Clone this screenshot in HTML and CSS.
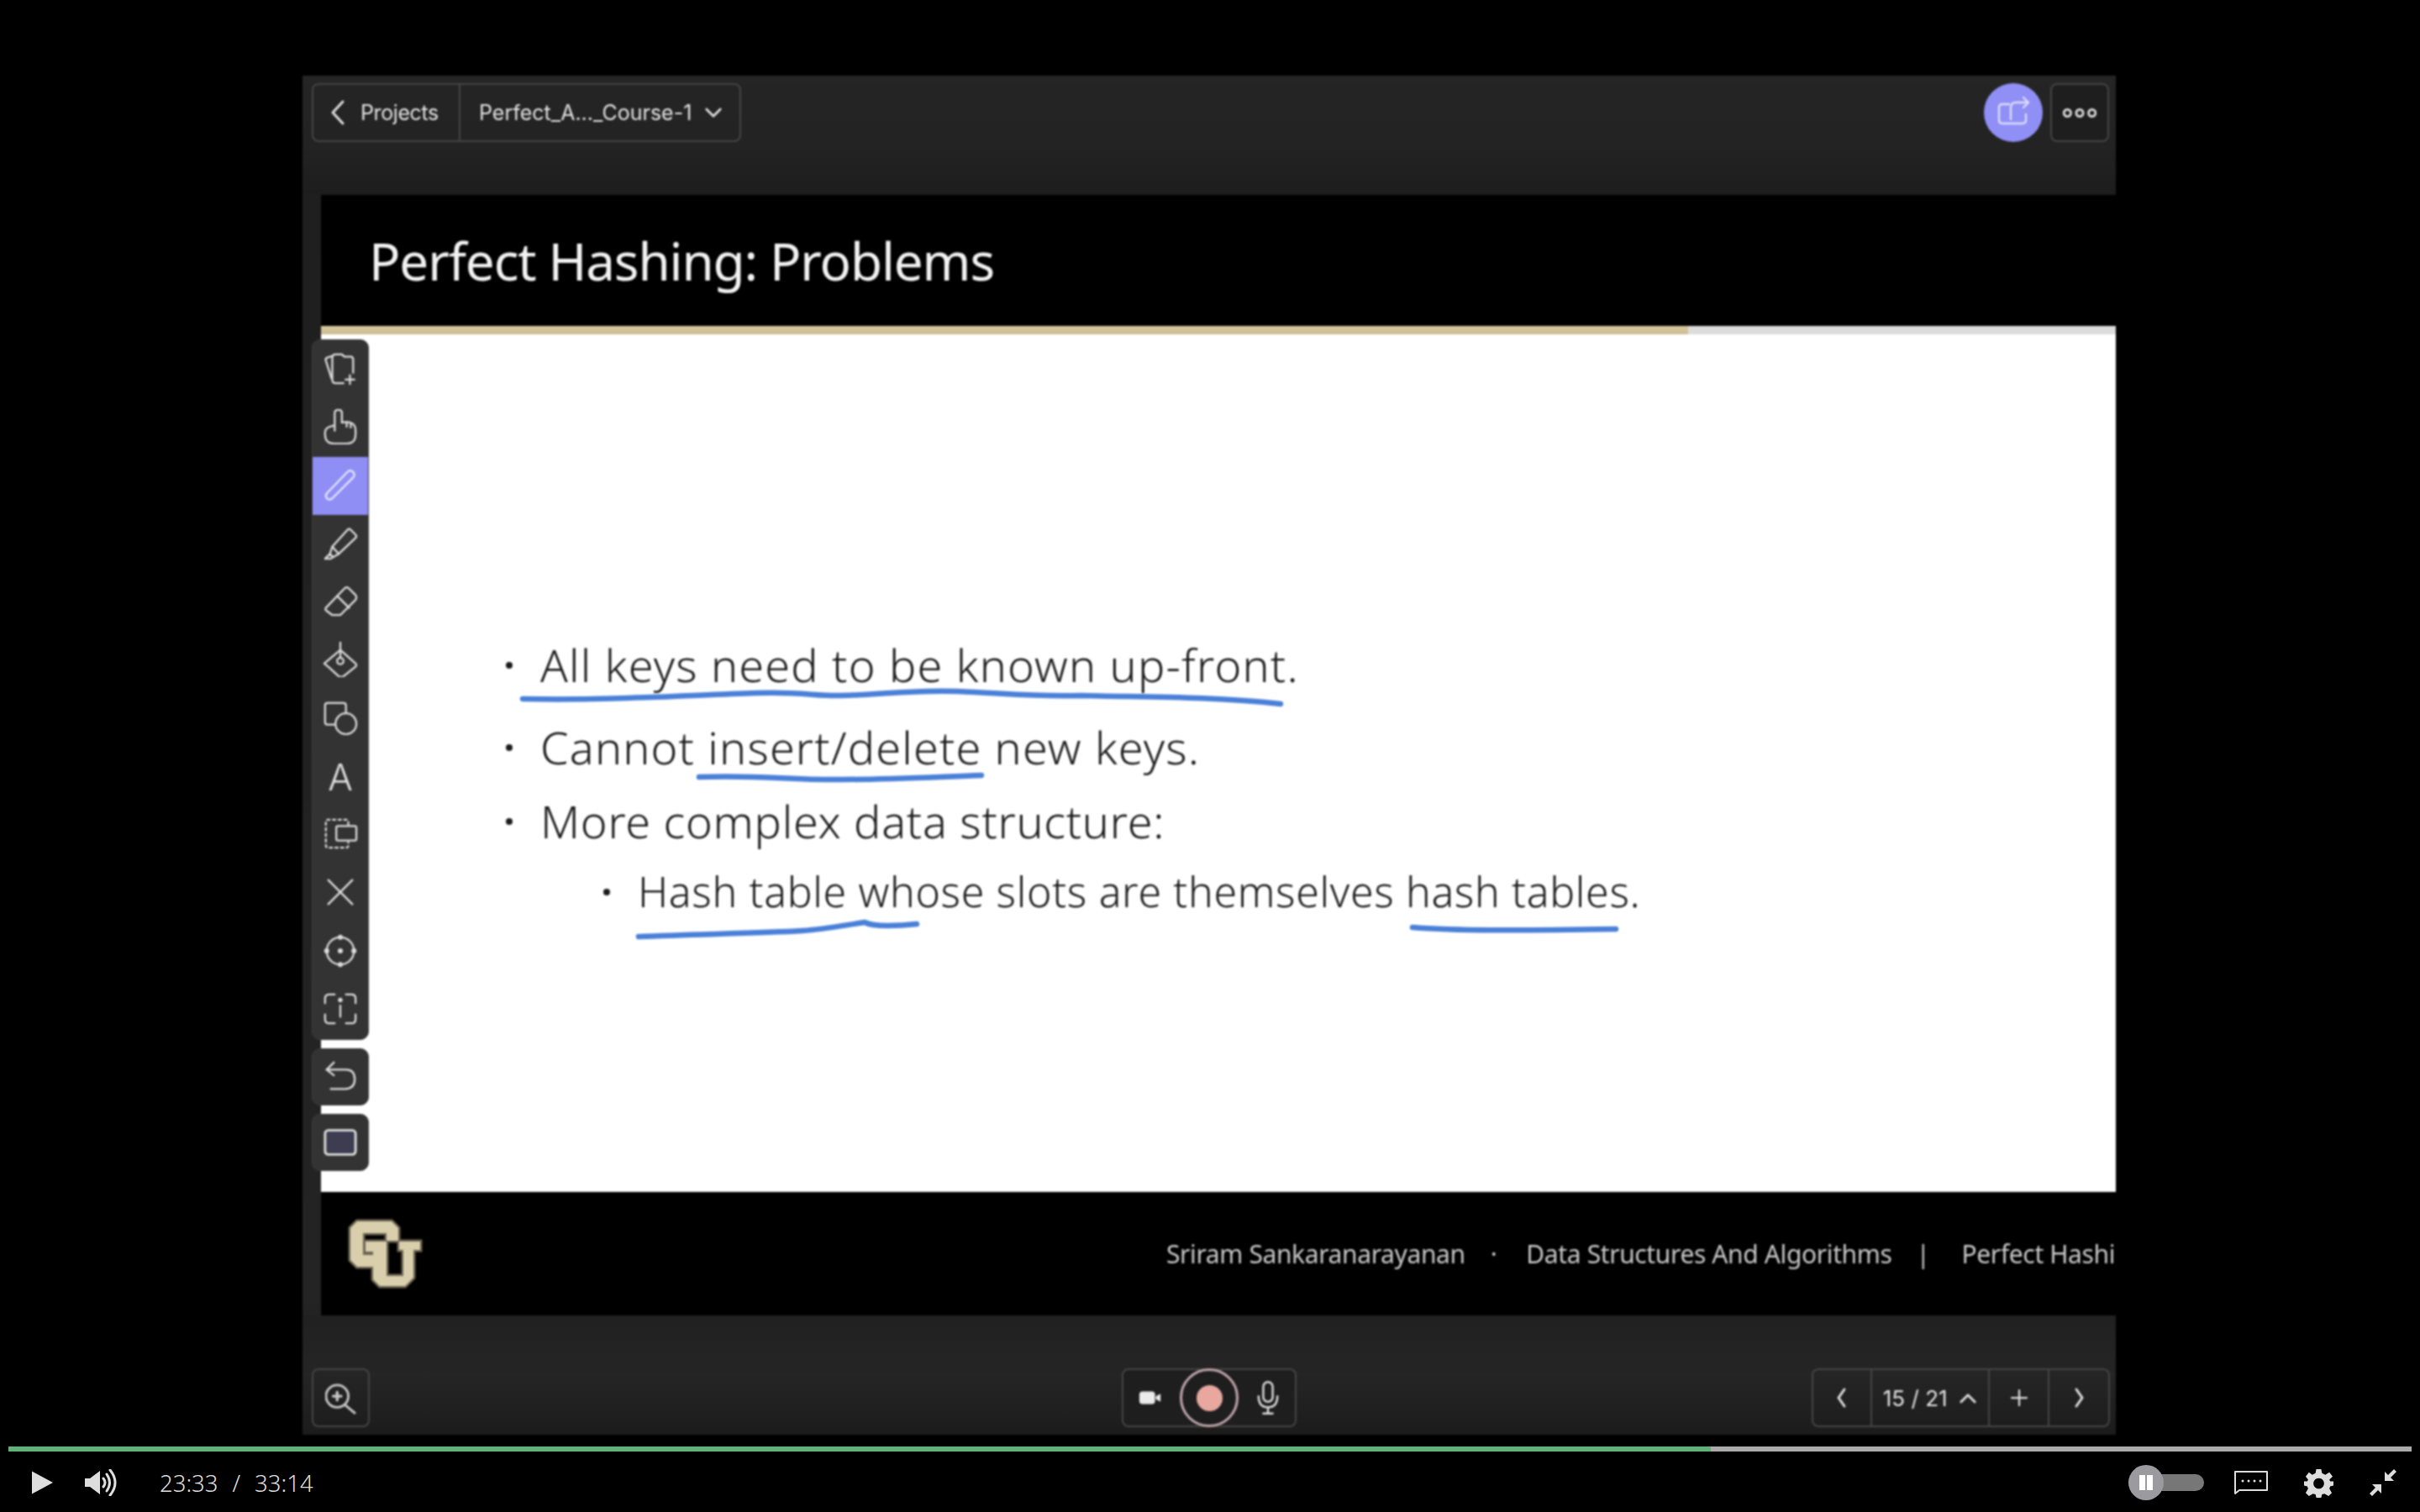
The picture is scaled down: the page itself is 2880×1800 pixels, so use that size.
FILE: index.html
```html
<!DOCTYPE html>
<html lang="en">

<head>
    <meta charset="UTF-8">
    <title>Perfect Hashing: Problems</title>
    <link rel="stylesheet" href="styles.css">
</head>

<body>
    <div class="app">
        <!-- top bar -->
        <div class="topbar">
            <div class="btn-group">
                <div class="seg seg-back">
                    <svg class="ico-small" viewBox="0 0 24 32"><path d="M18 3 L6 16 L18 29" /></svg>
                    <span>Projects</span>
                </div>
                <div class="seg seg-name">
                    <span>Perfect_A..._Course-1</span>
                    <svg class="ico-chev" viewBox="0 0 24 16"><path d="M3 3 L12 12 L21 3" /></svg>
                </div>
            </div>
            <div class="top-right">
                <div class="share">
                    <svg viewBox="0 0 44 44"><path d="M17 12 H9 Q5 12 5 16 V31 Q5 35 9 35 H33 Q37 35 37 31 V24" /><path d="M19 30 V16 Q19 10 25 10 H40" /><path d="M34 4 L40 10 L34 16" /></svg>
                </div>
                <div class="more-btn">
                    <svg viewBox="0 0 48 16"><circle cx="8" cy="8" r="4.5" /><circle cx="24" cy="8" r="4.5" /><circle cx="40" cy="8" r="4.5" /></svg>
                </div>
            </div>
        </div>

        <!-- slide -->
        <div class="slide">
            <div class="slide-head">Perfect Hashing: Problems</div>
            <div class="slide-rule"><div class="slide-rule-done"></div></div>
            <div class="slide-body">
                <ul class="points">
                    <li class="point point-1">All keys need to be known up-front.</li>
                    <li class="point point-2">Cannot insert/delete new keys.</li>
                    <li class="point point-3">More complex data structure:</li>
                    <li class="point sub">Hash table whose slots are themselves hash tables.</li>
                </ul>
                <!-- pen strokes drawn over the slide -->
                <svg class="ink" viewBox="0 0 2136 1020">
                    <path d="M240 434 C340 436 430 430 518 427 C570 425 590 431 619 430 C670 429 700 423 757 425 C810 427 850 432 904 430 C980 432 1060 431 1142 440" />
                    <path d="M450 527 C520 524 560 531 620 530 C680 530 730 527 786 525" />
                    <path d="M378 717 C450 714 520 713 573 710 C600 708 620 704 647 700 C655 704 665 704 674 704 C690 704 700 703 709 702" />
                    <path d="M1299 706 C1350 710 1420 710 1541 708" />
                </svg>
            </div>
            <div class="slide-foot">
                <svg class="cu-logo" viewBox="8 4 100 96">
                    <path d="M25 13 H66 L74 21 V36 H60 V27 H32 V53 H45 V67 H25 L17 59 V21 Z M35 37 H60 V78 H80 V47 H75 V37 H100 V47 H92 V80 L82 90 H52 L44 82 V49 H35 Z" />
                </svg>
                <div class="foot-text">
                    <span>Sriram Sankaranarayanan</span>
                    <span class="foot-dot">&middot;</span>
                    <span>Data Structures And Algorithms</span>
                    <span class="foot-bar">|</span>
                    <span>Perfect Hashi</span>
                </div>
            </div>
        </div>

        <!-- bottom bar -->
        <div class="bottombar">
            <div class="zoom-btn">
                <svg viewBox="0 0 40 44"><circle cx="15" cy="20" r="14" /><path d="M25 31 L37 41" /><path class="plus" d="M15 15 V25 M10 20 H20" /></svg>
            </div>
            <div class="rec-group">
                <svg class="ico-cam" viewBox="0 0 30 20"><rect x="1" y="2" width="20" height="16" rx="4" /><path d="M22 8 L28 5 V15 L22 12 Z" /></svg>
                <div class="rec-ring"><div class="rec-dot"></div></div>
                <svg class="ico-mic" viewBox="0 0 30 44"><rect x="9" y="2" width="12" height="25" rx="6" /><path d="M3 20 Q3 34 15 34 Q27 34 27 20 M15 34 V42 M9 42 H21" /></svg>
            </div>
            <div class="pager">
                <div class="pg pg-arrow"><svg class="ico-small" viewBox="0 0 24 32"><path d="M15 6 L8 16 L15 26" /></svg></div>
                <div class="pg pg-count"><span>15 / 21</span><svg class="ico-chev" viewBox="0 0 24 16"><path d="M3 13 L12 4 L21 13" /></svg></div>
                <div class="pg pg-plus"><svg class="ico-small" viewBox="0 0 32 32"><path d="M16 4 V28 M4 16 H28" /></svg></div>
                <div class="pg pg-arrow"><svg class="ico-small" viewBox="0 0 24 32"><path d="M9 6 L16 16 L9 26" /></svg></div>
            </div>
        </div>

        <!-- drawing tools, hangs over the slide edge -->
        <div class="tools">
            <div class="toolbox">
                <div class="tool"><svg viewBox="0 0 44 44"><path d="M12 6 L6 8 Q3 9 4 12 L11 34" /><path d="M12 8 Q12 4 16 4 H24 L27 7 H35 Q38 7 38 11 V27 M26 40 H16 Q12 40 12 36 V8" /><path d="M34 30 V41 M28.5 35.5 H39.5" /></svg></div>
                <div class="tool"><svg viewBox="0 0 44 44"><path d="M15 27 V5 Q15 1 19.5 1 Q24 1 24 5 V17 Q32 15 37 18 Q41 21 41 26 V32 Q41 43 30 43 H14 Q3 43 3 32 V29 Q3 24 9 22 L15 20" /><path d="M30 16 V22 M35 18 V23" /></svg></div>
                <div class="tool tool-on"><svg viewBox="0 0 44 44"><path d="M5 33 L31 6 Q34 3 38 6 Q41 10 38 13 L12 39 Q8 42 5 39 Q3 36 5 33 Z" /></svg></div>
                <div class="tool"><svg viewBox="0 0 44 44"><path d="M12 26 L31 5 Q33 3 35 5 L41 11 Q43 13 41 15 L20 35 Z" /><path d="M12 26 L9 35 L13 39 L20 35 M9 35 L3 41 H10 L13 39" /></svg></div>
                <div class="tool"><svg viewBox="0 0 44 44"><path d="M4 30 L27 6 Q30 3 33 6 L41 14 Q43 17 41 20 L22 39 H12 L4 33 Q3 31 4 30 Z" /><path d="M18 15 L33 30" /></svg></div>
                <div class="tool"><svg viewBox="0 0 44 44"><path d="M22 0 V20" /><circle cx="22" cy="24" r="4" /><path d="M2 27 L20 12 Q22 10 24 12 L41 27 Q43 29 41 31 L26 43 Q23 45 20 43 L8 32 Z" /></svg></div>
                <div class="tool"><svg viewBox="0 0 44 44"><path d="M15 31 H6 Q3 31 3 28 V7 Q3 4 6 4 H26 Q29 4 29 7 V16" /><circle cx="29" cy="30" r="13" /></svg></div>
                <div class="tool"><span class="tool-a">A</span></div>
                <div class="tool"><svg viewBox="0 0 44 44"><path class="dash" d="M32 10 V7 Q32 4 29 4 H7 Q4 4 4 7 V36 Q4 39 7 39 H29 Q32 39 32 36 V32" /><rect x="17" y="12" width="25" height="18" rx="2" /></svg></div>
                <div class="tool"><svg viewBox="0 0 44 44"><path d="M7 7 L37 37 M37 7 L7 37" /></svg></div>
                <div class="tool"><svg viewBox="0 0 44 44"><circle cx="22" cy="22" r="17" /><circle class="solid" cx="22" cy="22" r="2" /><circle class="solid" cx="22" cy="5" r="2" /><circle class="solid" cx="22" cy="39" r="2" /><circle class="solid" cx="5" cy="22" r="2" /><circle class="solid" cx="39" cy="22" r="2" /></svg></div>
                <div class="tool"><svg viewBox="0 0 44 44"><path d="M15 4 H8 Q3 4 3 9 V15 M29 4 H36 Q41 4 41 9 V15 M15 40 H8 Q3 40 3 35 V29 M29 40 H36 Q41 40 41 35 V29" /><path d="M22 18 V32" /><circle class="solid" cx="22" cy="11" r="1.6" /></svg></div>
            </div>
            <div class="toolbox toolbox-one">
                <svg viewBox="0 0 44 44"><path d="M14 4 L5 13 L14 20" /><path d="M5 13 H29 Q40 13 40 25 Q40 37 28 37 H10" /></svg>
            </div>
            <div class="toolbox toolbox-one">
                <svg viewBox="0 0 44 44"><rect class="screen" x="3" y="7" width="38" height="30" rx="4" /></svg>
            </div>
        </div>
    </div>

    <!-- video player controls -->
    <div class="player">
        <div class="progress"><div class="progress-done"></div></div>
        <div class="controls">
            <svg class="play" viewBox="0 0 26 28"><path d="M0 0 L26 14 L0 28 Z" /></svg>
            <svg class="volume" viewBox="0 0 38 32"><path class="fill" d="M0 11 H6 L18 2 V30 L6 21 H0 Z" /><path d="M22 11 Q26 16 22 21 M26 6 Q33 16 26 26 M30 1 Q42 16 30 31" /></svg>
            <div class="time">23:33<span class="time-sep">/</span>33:14</div>
            <div class="controls-right">
                <div class="toggle"><div class="toggle-knob"><i></i><i></i></div></div>
                <svg class="cc" viewBox="0 0 40 30"><path d="M1 25 V2 H39 V24 H6 L1 28 Z" /><circle cx="10" cy="13" r="1.5" /><circle cx="17" cy="13" r="1.5" /><circle cx="24" cy="13" r="1.5" /><circle cx="31" cy="13" r="1.5" /></svg>
                <svg class="gear" viewBox="0 0 36 36"><path d="M15 1 H21 L22 6 L26 8 L31 5 L35 10 L31 14 L32 16 H36 V21 L32 22 L31 25 L34 30 L30 34 L25 31 L22 32 L21 36 H15 L14 32 L11 31 L6 34 L2 30 L5 25 L4 22 L0 21 V16 H4 L5 14 L2 10 L6 5 L10 8 L14 6 Z M18 12 A6.5 6.5 0 1 0 18.01 12 Z" /></svg>
                <svg class="shrink" viewBox="0 0 34 34"><path d="M33 4 L30 1 L23 8 L19 4 V15 H30 L26 11 Z M1 30 L4 33 L11 26 L15 30 V19 H4 L8 23 Z" /></svg>
            </div>
        </div>
    </div>
</body>

</html>
```

FILE: styles.css
```css
* {
    box-sizing: border-box;
}

html,
body {
    margin: 0;
    padding: 0;
    height: 100%;
    overflow: hidden;
    background-color: #000;
}

body {
    font-family: "Open Sans", sans-serif;
    display: flex;
    flex-direction: column;
    padding-top: 90px;
}

svg {
    display: block;
    fill: none;
    stroke: #ddd;
    stroke-width: 2.4;
    stroke-linecap: round;
    stroke-linejoin: round;
}

/* app frame */
.app {
    position: relative;
    width: 2158px;
    height: 1618px;
    margin-left: 360px;
    display: flex;
    flex-direction: column;
    background: linear-gradient(#242424, #1f1f1f 9%, #242424 90%, #1c1c1c);
    color: #e2e2e2;
    filter: blur(1px);
}

/* top bar */
.topbar {
    height: 142px;
    padding: 9px 8px 0 11px;
    display: flex;
    justify-content: space-between;
    align-items: flex-start;
    background: linear-gradient(#252525, #232323 60%, #1d1d1d);
}

.btn-group {
    display: flex;
    width: 511px;
    height: 70px;
    border: 2px solid #444;
    border-radius: 8px;
    font-family: "Inter", sans-serif;
    font-size: 25px;
    letter-spacing: -0.4px;
}

.seg {
    display: flex;
    align-items: center;
}

.seg-back {
    width: 175px;
    padding-left: 17px;
    gap: 15px;
    border-right: 2px solid #444;
}

.seg-name {
    padding-left: 22px;
    gap: 15px;
    letter-spacing: 0;
}

.ico-small {
    width: 24px;
    height: 32px;
    stroke-width: 3;
}

.ico-chev {
    width: 22px;
    height: 15px;
    stroke-width: 3;
}

.top-right {
    display: flex;
    align-items: center;
    gap: 9px;
}

.share {
    width: 70px;
    height: 70px;
    border-radius: 50%;
    background-color: #908ff5;
    display: flex;
    align-items: center;
    justify-content: center;
}

.share svg {
    width: 44px;
    height: 44px;
    stroke: #dcdcfb;
}

.more-btn {
    width: 70px;
    height: 70px;
    border: 2px solid #444;
    border-radius: 8px;
    background-color: #1e1e1f;
    display: flex;
    align-items: center;
    justify-content: center;
}

.more-btn svg {
    width: 44px;
    height: 15px;
    stroke-width: 3;
}

/* slide */
.slide {
    margin-left: 22px;
    height: 1334px;
    overflow: hidden;
    background-color: #000;
}

.slide-head {
    height: 156px;
    padding-left: 57px;
    display: flex;
    align-items: center;
    color: #f2f2f2;
    font-size: 62px;
    letter-spacing: -1.15px;
    font-family: "Noto Sans", sans-serif;
}

.slide-rule {
    height: 10px;
    background-color: #dcdcdc;
}

.slide-rule-done {
    width: 1627px;
    height: 100%;
    background: linear-gradient(#d8c9a0, #cdbc90);
}

.slide-body {
    position: relative;
    height: 1021px;
    padding-top: 356px;
    background-color: #fff;
    color: #1c1c1c;
    font-family: "Noto Sans", sans-serif;
    font-size: 54px;
    font-weight: 300;
    line-height: 74px;
}

.points {
    list-style: none;
    margin: 0;
    padding: 0 0 0 261px;
}

.point {
    position: relative;
    white-space: nowrap;
}

.point::before {
    content: "";
    position: absolute;
    left: -41px;
    top: 34px;
    width: 8px;
    height: 8px;
    border-radius: 50%;
    background-color: #1c1c1c;
}

.point-1 {
    letter-spacing: 1.2px;
}

.point-2 {
    margin-top: 24px;
    letter-spacing: 1.16px;
}

.point-3 {
    margin-top: 14px;
    letter-spacing: 0.72px;
}

.sub {
    margin-top: 10px;
    margin-left: 116px;
    font-size: 50px;
    letter-spacing: 0.66px;
}

.ink {
    position: absolute;
    left: 0;
    top: 0;
    width: 2136px;
    height: 1020px;
    stroke: #4a80d8;
    stroke-width: 6.5;
}

.slide-foot {
    height: 147px;
    display: flex;
    align-items: center;
    padding-left: 26px;
}

.cu-logo {
    width: 100px;
    height: 96px;
    flex-shrink: 0;
    fill: #d9cfac;
    stroke: #6b6454;
    stroke-width: 5;
    stroke-linejoin: miter;
    paint-order: stroke;
}

.foot-text {
    margin-left: 880px;
    display: flex;
    align-items: center;
    white-space: nowrap;
    color: #c8c8c8;
    font-size: 30px;
    letter-spacing: -0.38px;
    font-family: "Noto Sans", sans-serif;
}

.foot-dot {
    margin: 0 35px 0 30px;
}

.foot-bar {
    margin: 0 38px 0 29px;
}

/* bottom bar */
.bottombar {
    position: relative;
    height: 142px;
    padding: 63px 7px 0 11px;
    display: flex;
    align-items: flex-start;
    background: linear-gradient(#212121, #252525 50%, #1c1c1c);
}

.zoom-btn {
    width: 69px;
    height: 70px;
    border: 2px solid #444;
    border-radius: 8px;
    display: flex;
    align-items: center;
    justify-content: center;
}

.zoom-btn svg {
    width: 38px;
    height: 42px;
    stroke: #c8c8c8;
    stroke-width: 3;
}

.zoom-btn .plus {
    stroke-width: 3.5;
}

.rec-group {
    width: 208px;
    height: 70px;
    margin-left: 895px;
    border: 2px solid #444;
    border-radius: 8px;
    display: flex;
    align-items: center;
    justify-content: space-between;
    padding: 0 18px;
    background-color: #1e1e1f;
}

.ico-cam {
    width: 28px;
    height: 20px;
    fill: #ececec;
    stroke: none;
}

.rec-ring {
    width: 70px;
    height: 70px;
    border: 3px solid #bfa5aa;
    border-radius: 50%;
    display: flex;
    align-items: center;
    justify-content: center;
    flex-shrink: 0;
}

.rec-dot {
    width: 31px;
    height: 31px;
    border-radius: 50%;
    background-color: #e8a8a0;
}

.ico-mic {
    width: 28px;
    height: 42px;
    stroke-width: 2.6;
}

.pager {
    width: 355px;
    height: 70px;
    margin-left: auto;
    border: 2px solid #444;
    border-radius: 8px;
    display: flex;
    font-family: "Inter", sans-serif;
    font-size: 26px;
}

.pg {
    display: flex;
    align-items: center;
    justify-content: center;
    border-right: 2px solid #444;
}

.pg:last-child {
    border-right: 0;
}

.pg-arrow {
    width: 70px;
}

.pg-count {
    width: 141px;
    gap: 13px;
}

.pg-plus {
    width: 72px;
}

/* tools */
.tools {
    position: absolute;
    left: 11px;
    top: 314px;
    width: 68px;
    display: flex;
    flex-direction: column;
    gap: 10px;
}

.toolbox {
    background-color: #333;
    border: 1px solid #3c3c3c;
    border-radius: 10px;
    overflow: hidden;
}

.toolbox-one {
    height: 68px;
    display: flex;
    align-items: center;
    justify-content: center;
}

.toolbox svg {
    width: 42px;
    height: 42px;
}

.tool {
    height: 69.3px;
    display: flex;
    align-items: center;
    justify-content: center;
}

.tool svg {
    margin-top: -2px;
}

.tool-on {
    background-color: #8f8ef5;
}

.tool-on svg {
    stroke: #e4e4fc;
}

.tool-a {
    color: #ddd;
    font-family: "Inter", sans-serif;
    font-size: 44px;
    font-weight: 300;
}

.dash {
    stroke-dasharray: 3 4;
}

.solid {
    fill: #ddd;
}

.screen {
    fill: #3d3c50;
    stroke-width: 3;
}

/* player */
.player {
    padding: 14px 10px 0;
}

.progress {
    height: 6px;
    background-color: #aaa;
}

.progress-done {
    width: 2026px;
    height: 100%;
    background-color: #5fb178;
}

.controls {
    display: flex;
    align-items: center;
    height: 74px;
    padding-left: 28px;
    color: #ddd;
}

.controls svg {
    flex-shrink: 0;
}

.play {
    width: 25px;
    height: 28px;
    fill: #ddd;
    stroke: none;
}

.volume {
    width: 38px;
    height: 32px;
    margin-left: 38px;
    stroke-width: 3;
}

.volume .fill {
    fill: #ddd;
    stroke: none;
}

.time {
    margin-left: 51px;
    font-size: 27.5px;
    font-family: "Noto Sans", sans-serif;
    font-weight: 300;
    white-space: nowrap;
}

.time-sep {
    margin: 0 17px;
}

.controls-right {
    margin-left: auto;
    display: flex;
    align-items: center;
    padding-right: 17px;
}

.toggle {
    width: 90px;
    height: 20px;
    border-radius: 10px;
    background-color: #777;
    display: flex;
    align-items: center;
}

.toggle-knob {
    width: 42px;
    height: 42px;
    border-radius: 50%;
    background-color: #9a9a9f;
    display: flex;
    align-items: center;
    justify-content: center;
    gap: 2px;
    flex-shrink: 0;
}

.toggle-knob i {
    width: 7px;
    height: 18px;
    background-color: #fff;
}

.cc {
    width: 40px;
    height: 30px;
    margin-left: 36px;
    stroke-width: 2;
}

.cc circle {
    fill: #ddd;
    stroke: none;
}

.gear {
    width: 35px;
    height: 35px;
    margin-left: 43px;
    fill: #ddd;
    fill-rule: evenodd;
    stroke: none;
}

.shrink {
    width: 34px;
    height: 34px;
    margin-left: 42px;
    fill: #ddd;
    stroke: none;
}
```
